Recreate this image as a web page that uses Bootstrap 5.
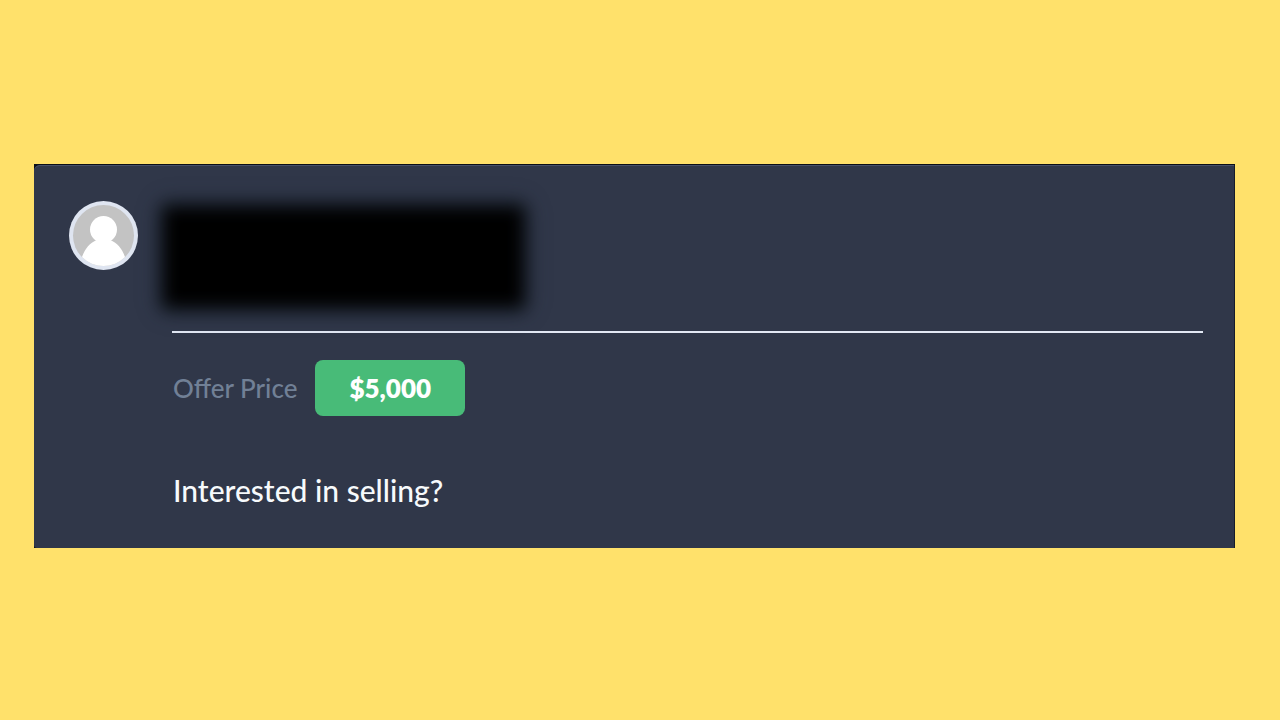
<!DOCTYPE html>
<html lang="en">
<head>
<meta charset="utf-8">
<meta name="viewport" content="width=device-width, initial-scale=1">
<title>Offer</title>
<link href="https://cdn.jsdelivr.net/npm/bootstrap@5.3.0/dist/css/bootstrap.min.css" rel="stylesheet">
<style>
body { background: #ffe16b; font-family: Lato, sans-serif; }
.page { padding: 0 45px 8px 34px; }
.frame { background: #0b0f18; padding-top: 1px; }
.offer { background: #303749; box-shadow: inset 0 1px #46506a; border-radius: 6px 0 0 3px; border-right: 1px solid #171c28; padding: 36px 31px 38px 35px; gap: 34px; }
.avatar { width: 69px; height: 69px; }
.sender { height: 132px; padding-top: 4px; border-bottom: 2px solid #e2e8f4; }
.redacted { width: 363px; height: 104px; margin-left: -10px; background: #000; filter: blur(9px); box-shadow: 0 0 12px #1a2a3a; }
.price-row { margin-top: 27px; gap: 18px; padding-left: 1px; }
.price-label { color: #718096; font-size: 26px; line-height: 32px; font-weight: 500; }
.price { background: #48bb78; color: #fff; font-size: 26px; line-height: 32px; font-weight: 800; padding: 12px 34px; border: 0; border-radius: 8px; }
.price:hover { background: #3fab6c; color: #fff; }
.message { color: #f7fafc; font-size: 30px; line-height: 40px; font-weight: 500; margin-top: 54px; padding-left: 1px; }
</style>
</head>
<body>
<main class="page min-vh-100 d-flex align-items-center">
  <div class="frame w-100">
  <article class="offer d-flex align-items-start">
    <svg class="avatar flex-shrink-0" viewBox="0 0 69 69" role="img" aria-label="User avatar">
      <defs><clipPath id="face"><circle cx="34.5" cy="34.5" r="30.5"/></clipPath></defs>
      <circle cx="34.5" cy="34.5" r="34.5" fill="#dfe5f1"/>
      <circle cx="34.5" cy="34.5" r="30.5" fill="#c3c3c3"/>
      <g clip-path="url(#face)" fill="#fff">
        <circle cx="34.5" cy="28.500" r="13.500"/>
        <path d="M28 39C20 42 15.500 49 13 56V69H56V56C53.500 49 49 42 41 39Z"/>
      </g>
    </svg>
    <div class="flex-grow-1">
      <div class="sender"><div class="redacted"></div></div>
      <div class="price-row d-flex align-items-center">
        <span class="price-label">Offer Price</span>
        <button type="button" class="btn price">$5,000</button>
      </div>
      <p class="message mb-0">Interested in selling?</p>
    </div>
  </article>
  </div>
</main>
<script src="https://cdn.jsdelivr.net/npm/bootstrap@5.3.0/dist/js/bootstrap.bundle.min.js"></script>
</body>
</html>
